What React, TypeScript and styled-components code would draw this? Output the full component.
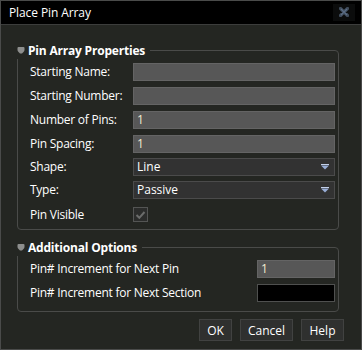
import * as React from 'react';
import styled, { createGlobalStyle } from 'styled-components';

const GlobalStyle = createGlobalStyle`
  html, body {
    margin: 0;
    padding: 0;
    background: #242622;
  }
  * {
    box-sizing: border-box;
  }
`;

const Window = styled.div`
  width: 362px;
  height: 350px;
  background: #242622;
  border: 1px solid #4a4b4a;
  display: flex;
  flex-direction: column;
  font-family: 'Open Sans', 'Noto Sans', sans-serif;
  font-size: 12px;
  color: #ffffff;
`;

const TitleBar = styled.div`
  height: 24px;
  flex: none;
  background: #000;
  border-bottom: 1px solid #3c3d3c;
  display: flex;
  align-items: center;
  justify-content: space-between;
  padding: 0 6px 1px 8px;
`;

const Title = styled.span`
  font-size: 12px;
  letter-spacing: -0.1px;
`;

const CloseBox = styled.div`
  width: 22px;
  height: 17px;
  background: #0b0c0c;
  display: flex;
  align-items: center;
  justify-content: center;
`;

const Body = styled.div`
  flex: 1;
  display: flex;
  flex-direction: column;
  padding: 17px 22px 0 16px;
`;

const Group = styled.fieldset<{ $mt?: number }>`
  margin: ${p => p.$mt ?? 0}px 0 0;
  padding: 0 0 0 12px;
  border: 1px solid #4a4b49;
  border-radius: 4px;
  min-width: 0;
`;

const Legend = styled.legend`
  margin-left: -13px;
  padding: 0 5px 0 0;
  display: flex;
  align-items: center;
  gap: 3px;
  font-weight: 700;
  font-size: 12px;
  letter-spacing: -0.2px;
`;

const Rows = styled.div<{ $pb: number }>`
  display: flex;
  flex-direction: column;
  padding: 4px 0 ${p => p.$pb}px;
`;

const Row = styled.div<{ $h: number; $labelW: number }>`
  display: grid;
  grid-template-columns: ${p => p.$labelW}px 1fr;
  align-items: start;
  height: ${p => p.$h}px;
  padding-right: 3px;
`;

const Label = styled.span`
  line-height: 18px;
  letter-spacing: -0.25px;
  white-space: nowrap;
`;

const TextField = styled.div<{ $black?: boolean; $w?: number }>`
  height: 18px;
  width: ${p => (p.$w ? `${p.$w}px` : '100%')};
  justify-self: end;
  background: ${p => (p.$black ? '#000' : '#575757')};
  border: 1px solid ${p => (p.$black ? '#4f504f' : '#646464')};
  color: #f3ecd2;
  line-height: 16px;
  padding-left: 3px;
`;

const Select = styled.div`
  height: 18px;
  background: #323232;
  border: 1px solid #4b4b4b;
  display: flex;
  align-items: center;
  justify-content: space-between;
  padding: 0 5px 0 3px;
  line-height: 16px;
`;

const Check = styled.div`
  width: 15px;
  height: 15px;
  border: 1px solid #545554;
  background: #2b2c2b;
  display: flex;
  align-items: center;
  justify-content: center;
`;

const ButtonBar = styled.div`
  display: flex;
  justify-content: flex-end;
  gap: 8px;
  margin-top: 7px;
  margin-right: -5px;
`;

const Button = styled.div<{ $w: number }>`
  width: ${p => p.$w}px;
  height: 22px;
  background: #2f302f;
  border: 1px solid #414241;
  display: flex;
  align-items: center;
  justify-content: center;
  font-size: 12px;
`;

const CollapseIcon = () => (
  <svg width="8" height="7" viewBox="0 0 8 7">
    <path d="M0.5 1 Q0.5 0 1.5 0 H6.5 Q7.5 0 7.5 1 V3 Q7.5 4 6.5 5 L5 6.5 H3 L1.5 5 Q0.5 4 0.5 3 Z" fill="#8d8e8d" />
  </svg>
);

const DropArrow = () => (
  <svg width="8" height="6" viewBox="0 0 8 6">
    <rect x="0" y="0" width="8" height="1" fill="#c3d0ea" />
    <path d="M0 1.5 H8 L4 5.5 Z" fill="#98add6" />
  </svg>
);

const CloseIcon = () => (
  <svg width="10" height="10" viewBox="0 0 10 10">
    <path d="M1.5 1.5 L8.5 8.5 M8.5 1.5 L1.5 8.5" stroke="#3f4b5a" strokeWidth="3.2" strokeLinecap="round" />
    <path d="M2 2 L8 8 M8 2 L2 8" stroke="#5a6c84" strokeWidth="1.2" />
  </svg>
);

const CheckMark = () => (
  <svg width="11" height="10" viewBox="0 0 11 10">
    <path d="M1.5 5 L4.3 7.8 L9.5 2" stroke="#6b6c6b" strokeWidth="2" fill="none" />
  </svg>
);

export default function App() {
  return (
    <>
      <GlobalStyle />
      <Window>
        <TitleBar>
          <Title>Place Pin Array</Title>
          <CloseBox>
            <CloseIcon />
          </CloseBox>
        </TitleBar>
        <Body>
          <Group>
            <Legend>
              <CollapseIcon />
              Pin Array Properties
            </Legend>
            <Rows $pb={7}>
              <Row $h={24} $labelW={103}>
                <Label>Starting Name:</Label>
                <TextField />
              </Row>
              <Row $h={24} $labelW={103}>
                <Label>Starting Number:</Label>
                <TextField />
              </Row>
              <Row $h={24} $labelW={103}>
                <Label>Number of Pins:</Label>
                <TextField>1</TextField>
              </Row>
              <Row $h={23} $labelW={103}>
                <Label>Pin Spacing:</Label>
                <TextField>1</TextField>
              </Row>
              <Row $h={23} $labelW={103}>
                <Label>Shape:</Label>
                <Select>
                  <span>Line</span>
                  <DropArrow />
                </Select>
              </Row>
              <Row $h={26} $labelW={103}>
                <Label>Type:</Label>
                <Select>
                  <span>Passive</span>
                  <DropArrow />
                </Select>
              </Row>
              <Row $h={15} $labelW={103}>
                <Label style={{ lineHeight: '15px' }}>Pin Visible</Label>
                <Check>
                  <CheckMark />
                </Check>
              </Row>
            </Rows>
          </Group>
          <Group $mt={9}>
            <Legend>
              <CollapseIcon />
              Additional Options
            </Legend>
            <Rows $pb={9}>
              <Row $h={24} $labelW={227}>
                <Label>Pin# Increment for Next Pin</Label>
                <TextField $w={78}>1</TextField>
              </Row>
              <Row $h={18} $labelW={227}>
                <Label>Pin# Increment for Next Section</Label>
                <TextField $w={78} $black />
              </Row>
            </Rows>
          </Group>
          <ButtonBar>
            <Button $w={33}>OK</Button>
            <Button $w={53}>Cancel</Button>
            <Button $w={43}>Help</Button>
          </ButtonBar>
        </Body>
      </Window>
    </>
  );
}
